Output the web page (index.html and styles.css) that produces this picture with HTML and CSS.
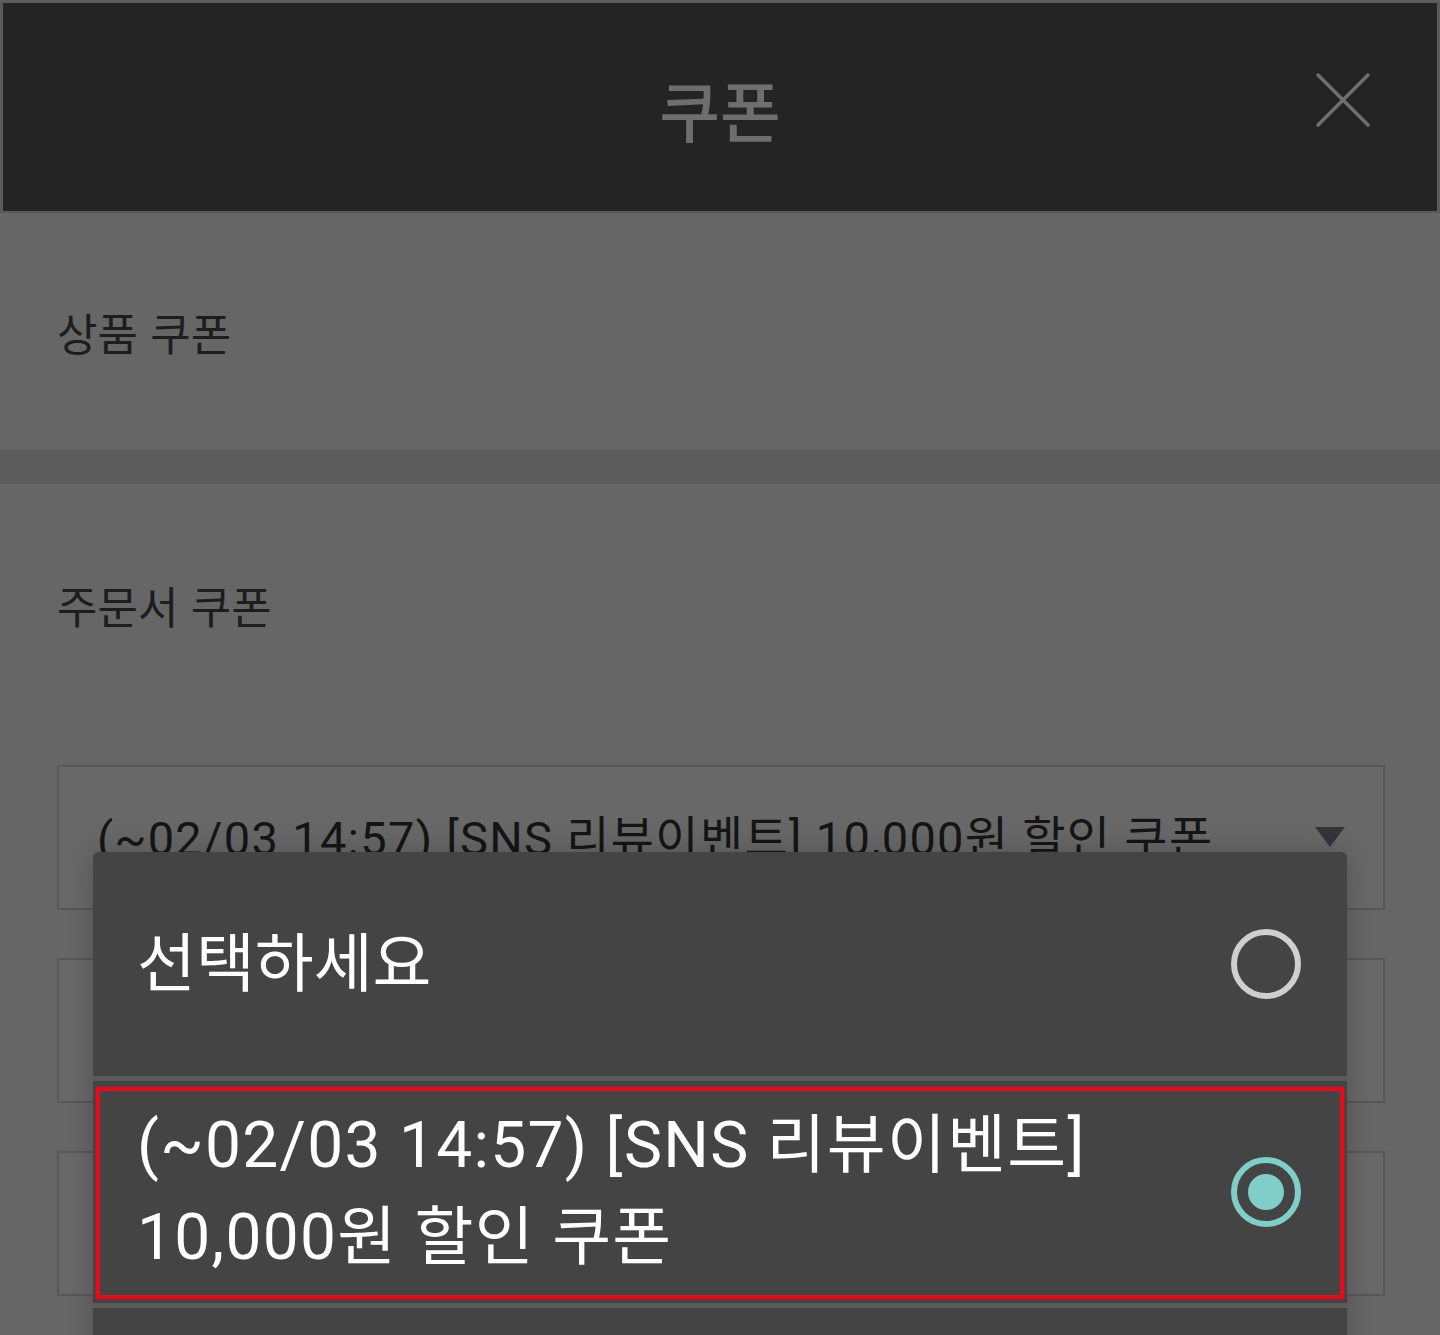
FILE: index.html
```html
<!DOCTYPE html>
<html lang="ko">
<head>
<meta charset="utf-8">
<title>쿠폰</title>
<link rel="stylesheet" href="styles.css">
</head>
<body>
<div class="page">
  <header class="header">
    <h1 class="title">쿠폰</h1>
    <button class="close" aria-label="닫기">
      <svg width="56" height="56" viewBox="0 0 56 56"><path d="M3 3 L53 53 M53 3 L3 53" stroke="#707070" stroke-width="3.5" fill="none" stroke-linecap="round"/></svg>
    </button>
  </header>

  <section class="section first">
    <div class="label">상품 쿠폰</div>
  </section>
  <div class="band"></div>

  <section class="section second">
    <div class="label-row"><div class="label">주문서 쿠폰</div></div>
    <div class="select">
      <span class="select-text">(~02/03 14:57) [SNS 리뷰이벤트] 10,000원 할인 쿠폰</span>
      <span class="arrow"></span>
    </div>
    <div class="select"></div>
    <div class="select"></div>
  </section>

  <div class="dropdown">
    <div class="item item-single">
      <span class="item-text">선택하세요</span>
      <span class="radio"></span>
    </div>
    <div class="divider"></div>
    <div class="item item-double selected">
      <span class="item-text">(~02/03 14:57) [SNS 리뷰이벤트]<br>10,000원 할인 쿠폰</span>
      <span class="radio checked"></span>
    </div>
    <div class="divider"></div>
    <div class="item item-rest"></div>
  </div>
</div>
</body>
</html>
```
FILE: styles.css
```css
html, body {
  margin: 0;
  padding: 0;
}
body {
  background: #666666;
  font-family: Roboto, "Noto Sans CJK KR", sans-serif;
  width: 1440px;
  height: 1335px;
  overflow: hidden;
}
.page {
  position: relative;
  width: 1440px;
  height: 1335px;
  overflow: hidden;
}
.header {
  box-sizing: border-box;
  height: 213px;
  background: #242424;
  border-top: 3px solid #5b5b5b;
  border-left: 3px solid #5b5b5b;
  border-right: 3px solid #5b5b5b;
  border-bottom: 2px solid #5a5a5a;
  display: flex;
  align-items: center;
  justify-content: center;
  position: relative;
}
.title {
  margin: 0;
  font-family: "Noto Sans CJK KR", sans-serif;
  font-size: 66px;
  font-weight: 500;
  color: #6e6e6e;
  line-height: 1;
  padding-top: 2px;
}
.close {
  position: absolute;
  right: 66px;
  top: 69px;
  width: 56px;
  height: 56px;
  padding: 0;
  border: 0;
  background: transparent;
}
.close svg {
  display: block;
}
.section {
  padding: 0 55px 0 57px;
}
.section.first {
  height: 237px;
  display: flex;
  align-items: center;
}
.label {
  font-family: "Noto Sans CJK KR", sans-serif;
  font-size: 44px;
  color: #1d1d1d;
  line-height: 1.2;
  padding-top: 2px;
}
.band {
  height: 34px;
  background: #5c5c5c;
}
.label-row {
  height: 240px;
  display: flex;
  align-items: center;
  margin-bottom: 41px;
}
.select {
  box-sizing: border-box;
  height: 145px;
  border: 2px solid #575757;
  background: #686868;
  margin-bottom: 48px;
  display: flex;
  align-items: center;
  padding: 0 38px 0 38px;
  justify-content: space-between;
}
.select-text {
  font-size: 47px;
  color: #151515;
  letter-spacing: 1.3px;
  white-space: nowrap;
  margin-top: -6px;
}
.arrow {
  width: 0;
  height: 0;
  border-left: 15px solid transparent;
  border-right: 15px solid transparent;
  border-top: 20px solid #34363b;
  margin-top: -2px;
}
.dropdown {
  position: absolute;
  left: 93px;
  top: 852px;
  width: 1254px;
  bottom: -20px;
  background: #5a5a5a;
  border-radius: 6px 6px 0 0;
  overflow: hidden;
  box-shadow: 0 0 28px rgba(0, 0, 0, 0.22);
  display: flex;
  flex-direction: column;
}
.item {
  background: #444444;
  display: flex;
  align-items: center;
  justify-content: space-between;
  padding: 0 46px 0 44px;
  position: relative;
}
.item-single {
  height: 224px;
}
.item-double {
  height: 222px;
}
.item-rest {
  flex: 1;
}
.divider {
  height: 5px;
  background: #5a5a5a;
}
.item-text {
  font-size: 64px;
  color: #ffffff;
  line-height: 92px;
  white-space: nowrap;
}
.item-single .item-text {
  padding-top: 2px;
}
.item-double .item-text {
  letter-spacing: 1.3px;
}
.radio {
  box-sizing: border-box;
  width: 70px;
  height: 70px;
  border-radius: 50%;
  border: 6px solid #cfcfcf;
  flex: none;
  display: flex;
  align-items: center;
  justify-content: center;
}
.radio.checked {
  border-color: #7fcfc8;
}
.radio.checked::after {
  content: "";
  width: 36px;
  height: 36px;
  border-radius: 50%;
  background: #7fcfc8;
}
.selected::after {
  content: "";
  position: absolute;
  left: 3px;
  right: 3px;
  top: 6px;
  bottom: 4px;
  border: 4px solid #e30b1c;
  box-shadow: 0 0 3px rgba(227, 11, 28, 0.5);
  pointer-events: none;
}
```
